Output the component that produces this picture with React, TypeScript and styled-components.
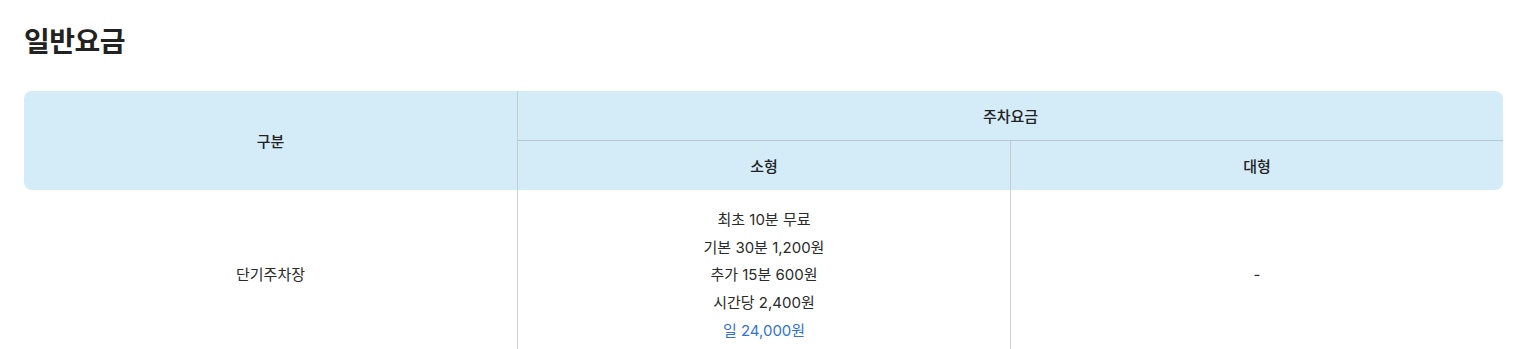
import styled, { createGlobalStyle } from 'styled-components';

const GlobalStyle = createGlobalStyle`
  body {
    margin: 0;
    background: #fff;
    font-family: Inter, 'Noto Sans CJK KR', 'Noto Sans', sans-serif;
    color: #222;
  }
`;

const Wrapper = styled.section`
  padding: 20px 22px 0 24px;
`;

const Title = styled.h2`
  margin: 0 0 27px;
  font-size: 28px;
  line-height: 44px;
  font-weight: 700;
  color: #222;
  letter-spacing: -0.5px;
`;

const Table = styled.table`
  width: 100%;
  border-collapse: separate;
  border-spacing: 0;
  table-layout: fixed;
`;

const Th = styled.th<{ $left?: boolean; $bottomLine?: boolean; $leftLine?: boolean }>`
  height: 49px;
  padding: 0;
  background: #d4ebf8;
  font-size: 15px;
  font-weight: 500;
  color: #222;
  text-align: center;
  vertical-align: middle;
  border-left: ${(p) => (p.$leftLine ? '1px solid #c6cdd1' : 'none')};
  border-bottom: ${(p) => (p.$bottomLine ? '1px solid #b6c6cf' : 'none')};
  ${(p) => (p.$left ? 'border-radius: 8px 0 0 8px;' : '')}
`;

const TopRightTh = styled(Th)`
  border-top-right-radius: 8px;
`;

const BottomRightTh = styled(Th)`
  border-bottom-right-radius: 8px;
`;

const Td = styled.td<{ $leftLine?: boolean }>`
  padding: 16px 0 15px;
  text-align: center;
  vertical-align: middle;
  font-size: 15px;
  line-height: 27.7px;
  color: #2a2a2a;
  border-left: ${(p) => (p.$leftLine ? '1px solid #cfcfcf' : 'none')};
`;

const Line = styled.div<{ $accent?: boolean }>`
  color: ${(p) => (p.$accent ? '#2f73cf' : '#2a2a2a')};
`;

const lines = ['최초 10분 무료', '기본 30분 1,200원', '추가 15분 600원', '시간당 2,400원'];

export default function App() {
  return (
    <>
      <GlobalStyle />
      <Wrapper>
        <Title>일반요금</Title>
        <Table>
          <thead>
            <tr>
              <Th rowSpan={2} $left style={{ height: 99 }}>
                구분
              </Th>
              <TopRightTh colSpan={2} $leftLine $bottomLine>
                주차요금
              </TopRightTh>
            </tr>
            <tr>
              <Th $leftLine>소형</Th>
              <BottomRightTh $leftLine>대형</BottomRightTh>
            </tr>
          </thead>
          <tbody>
            <tr>
              <Td>단기주차장</Td>
              <Td $leftLine>
                {lines.map((l) => (
                  <Line key={l}>{l}</Line>
                ))}
                <Line $accent>일 24,000원</Line>
              </Td>
              <Td $leftLine>-</Td>
            </tr>
          </tbody>
        </Table>
      </Wrapper>
    </>
  );
}
